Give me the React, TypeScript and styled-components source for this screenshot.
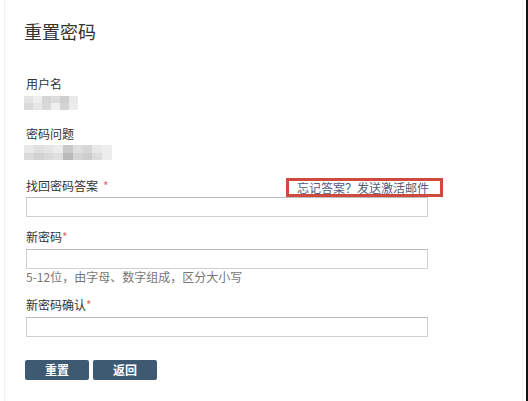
import React from "react";
import styled, { createGlobalStyle } from "styled-components";

const Global = createGlobalStyle`
  html, body { margin: 0; padding: 0; background: #fff; }
  body { font-family: "Noto Sans CJK SC", "Noto Sans", "Liberation Sans", sans-serif; color: #333; }
  * { box-sizing: border-box; }
`;

const Frame = styled.div`
  width: 528px;
  height: 401px;
  display: flex;
  background: #fff;
`;

const Panel = styled.div`
  flex: 1;
  margin-left: 4px;
  border-left: 1px solid #f1f1f1;
  border-right: 1px solid #f0f0f0;
  margin-right: 3px;
`;

const EdgeLine = styled.div`
  width: 2px;
  background: #111;
`;

const Form = styled.div`
  display: flex;
  flex-direction: column;
  align-items: flex-start;
  padding-left: 19px;
`;

const Title = styled.h1`
  margin: 19px 0 0;
  font-size: 18px;
  line-height: 24px;
  font-weight: 400;
  color: #333;
`;

const Label = styled.div<{ $mt: number }>`
  margin: ${(p) => p.$mt}px 0 0 2px;
  font-size: 12px;
  line-height: 16px;
  color: #333;
`;

const Star = styled.span<{ $gap?: number }>`
  color: #de6b6b;
  margin-left: ${(p) => p.$gap ?? 0}px;
`;

const Mosaic = styled.div<{ $mt: number; $cols: number; $w: number; $h: number }>`
  margin-top: ${(p) => p.$mt}px;
  width: ${(p) => p.$w}px;
  height: ${(p) => p.$h}px;
  display: grid;
  grid-template-columns: repeat(${(p) => p.$cols}, 1fr);
  grid-template-rows: 1fr 1fr;
`;

const Cell = styled.div<{ $c: string }>`
  background: ${(p) => p.$c};
`;

const AnswerRow = styled.div`
  margin-top: 18px;
  width: 419px;
  display: flex;
  justify-content: space-between;
  align-items: flex-start;
  height: 19px;
`;

const AnswerLabel = styled.div`
  margin-left: 2px;
  font-size: 12px;
  line-height: 16px;
  color: #333;
`;

const LinkBox = styled.a`
  display: flex;
  align-items: center;
  height: 19px;
  width: 157px;
  padding-left: 8px;
  border: 3px solid #cf4a3c;
  font-size: 12px;
  line-height: 14px;
  color: #4f5d7a;
  text-decoration: none;
  cursor: pointer;
`;

const Input = styled.input<{ $mt: number }>`
  margin: ${(p) => p.$mt}px 0 0 2px;
  width: 402px;
  height: 20px;
  border: 1px solid #cfcfcf;
  border-top-color: #bdbdbd;
  background: #fff;
  outline: none;
  padding: 0 4px;
  font-size: 12px;
`;

const Hint = styled.div`
  margin: 0 0 0 2px;
  font-size: 12px;
  line-height: 16px;
  color: #777;
`;

const Buttons = styled.div`
  margin: 23px 0 0 1px;
  display: flex;
  gap: 4px;
`;

const Button = styled.button`
  width: 64px;
  height: 20px;
  border: none;
  border-radius: 2px;
  background: #3d5a72;
  color: #fff;
  font-family: inherit;
  font-size: 12px;
  font-weight: 700;
  line-height: 20px;
  padding: 0;
  cursor: pointer;
`;

const mosaic1 = [
  "#e4e4e4", "#ededed", "#d6d6d6", "#dcdcdc", "#cfcfcf", "#e9e9e9",
  "#dadada", "#e6e6e6", "#d9d9d9", "#f0f0f0", "#d4d4d4", "#ececec",
];
const mosaic2 = [
  "#e8e8e8", "#dfdfdf", "#e4e4e4", "#ececec", "#c9c9c9", "#dedede", "#d6d6d6", "#e8e8e8", "#eeeeee",
  "#dadada", "#d2d2d2", "#d9d9d9", "#e0e0e0", "#b9b9b9", "#d4d4d4", "#cdcdcd", "#dcdcdc", "#ececec",
];

export default function App() {
  return (
    <>
      <Global />
      <Frame>
        <Panel>
          <Form>
            <Title>重置密码</Title>
            <Label $mt={33}>用户名</Label>
            <Mosaic $mt={4} $cols={6} $w={54} $h={14}>
              {mosaic1.map((c, i) => (
                <Cell key={i} $c={c} />
              ))}
            </Mosaic>
            <Label $mt={16}>密码问题</Label>
            <Mosaic $mt={3} $cols={9} $w={88} $h={15}>
              {mosaic2.map((c, i) => (
                <Cell key={i} $c={c} />
              ))}
            </Mosaic>
            <AnswerRow>
              <AnswerLabel>
                找回密码答案<Star $gap={5}>*</Star>
              </AnswerLabel>
              <LinkBox>忘记答案？发送激活邮件</LinkBox>
            </AnswerRow>
            <Input $mt={0} />
            <Label $mt={12}>
              新密码<Star>*</Star>
            </Label>
            <Input $mt={4} />
            <Hint>5-12位，由字母、数字组成，区分大小写</Hint>
            <Label $mt={12}>
              新密码确认<Star>*</Star>
            </Label>
            <Input $mt={4} />
            <Buttons>
              <Button>重置</Button>
              <Button>返回</Button>
            </Buttons>
          </Form>
        </Panel>
        <EdgeLine />
      </Frame>
    </>
  );
}
